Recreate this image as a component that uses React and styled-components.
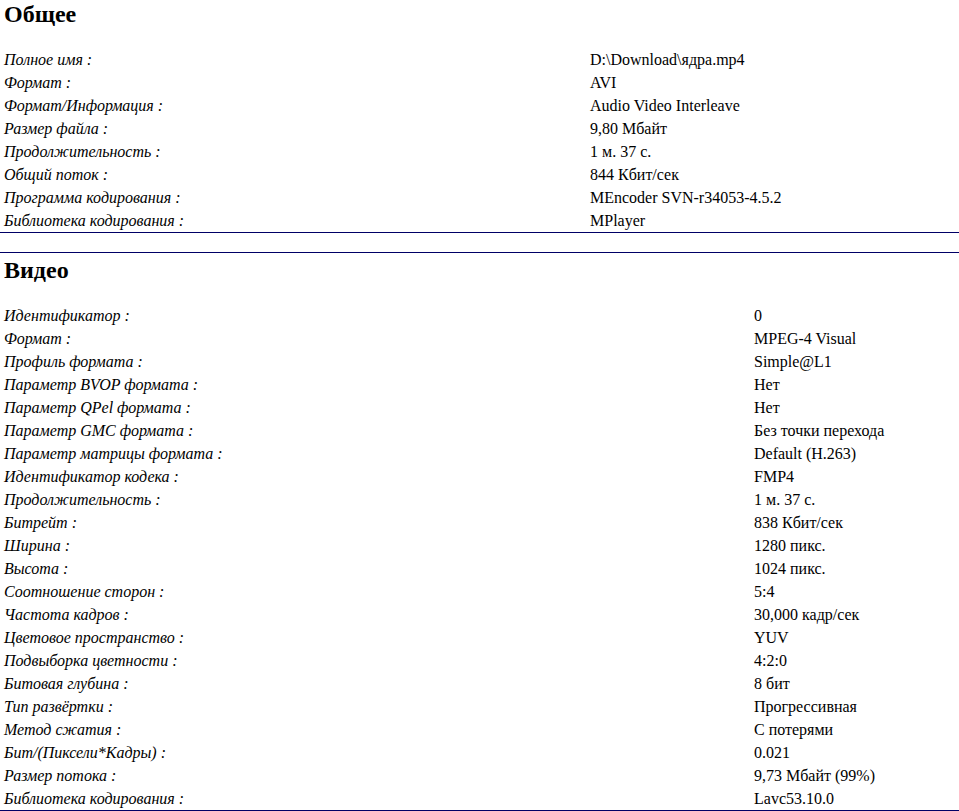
import React from "react";
import styled, { createGlobalStyle } from "styled-components";

const GlobalStyle = createGlobalStyle`
  html, body {
    margin: 0;
    padding: 0;
    background: #ffffff;
  }
  body {
    font-family: "Liberation Serif", "Times New Roman", serif;
    color: #000000;
  }
`;

const general = [
  ["Полное имя :", "D:\\Download\\ядра.mp4"],
  ["Формат :", "AVI"],
  ["Формат/Информация :", "Audio Video Interleave"],
  ["Размер файла :", "9,80 Мбайт"],
  ["Продолжительность :", "1 м. 37 с."],
  ["Общий поток :", "844 Кбит/сек"],
  ["Программа кодирования :", "MEncoder SVN-r34053-4.5.2"],
  ["Библиотека кодирования :", "MPlayer"],
];

const video = [
  ["Идентификатор :", "0"],
  ["Формат :", "MPEG-4 Visual"],
  ["Профиль формата :", "Simple@L1"],
  ["Параметр BVOP формата :", "Нет"],
  ["Параметр QPel формата :", "Нет"],
  ["Параметр GMC формата :", "Без точки перехода"],
  ["Параметр матрицы формата :", "Default (H.263)"],
  ["Идентификатор кодека :", "FMP4"],
  ["Продолжительность :", "1 м. 37 с."],
  ["Битрейт :", "838 Кбит/сек"],
  ["Ширина :", "1280 пикс."],
  ["Высота :", "1024 пикс."],
  ["Соотношение сторон :", "5:4"],
  ["Частота кадров :", "30,000 кадр/сек"],
  ["Цветовое пространство :", "YUV"],
  ["Подвыборка цветности :", "4:2:0"],
  ["Битовая глубина :", "8 бит"],
  ["Тип развёртки :", "Прогрессивная"],
  ["Метод сжатия :", "С потерями"],
  ["Бит/(Пиксели*Кадры) :", "0.021"],
  ["Размер потока :", "9,73 Мбайт (99%)"],
  ["Библиотека кодирования :", "Lavc53.10.0"],
];

const InfoSection = ({ title, rows, labelWidth, first }) => (
  <Section $first={first}>
    <Heading>{title}</Heading>
    <Table $labelWidth={labelWidth}>
      {rows.map(([label, value], i) => (
        <React.Fragment key={i}>
          <Label>{label}</Label>
          <Value>{value}</Value>
        </React.Fragment>
      ))}
    </Table>
  </Section>
);

const App = () => (
  <>
    <GlobalStyle />
    <Page>
      <InfoSection title="Общее" rows={general} labelWidth={590} first />
      <InfoSection title="Видео" rows={video} labelWidth={754} />
    </Page>
  </>
);

const Page = styled.div`
  width: 100%;
`;

const Section = styled.section`
  border-top: ${(p) => (p.$first ? "none" : "1px solid #000066")};
  border-bottom: 1px solid #000066;
  padding-top: ${(p) => (p.$first ? "0" : "3px")};
  margin-bottom: 19px;
`;

const Heading = styled.h2`
  margin: 0 0 20px;
  padding-left: 4px;
  height: 28px;
  line-height: 28px;
  font-size: 24px;
  font-weight: bold;
`;

const Table = styled.div`
  display: grid;
  grid-template-columns: ${(p) => p.$labelWidth}px 1fr;
  grid-auto-rows: 23px;
  font-size: 16px;
`;

const Label = styled.div`
  padding-left: 4px;
  line-height: 23px;
  font-style: italic;
  white-space: nowrap;
`;

const Value = styled.div`
  line-height: 23px;
  white-space: nowrap;
`;

export default App;
